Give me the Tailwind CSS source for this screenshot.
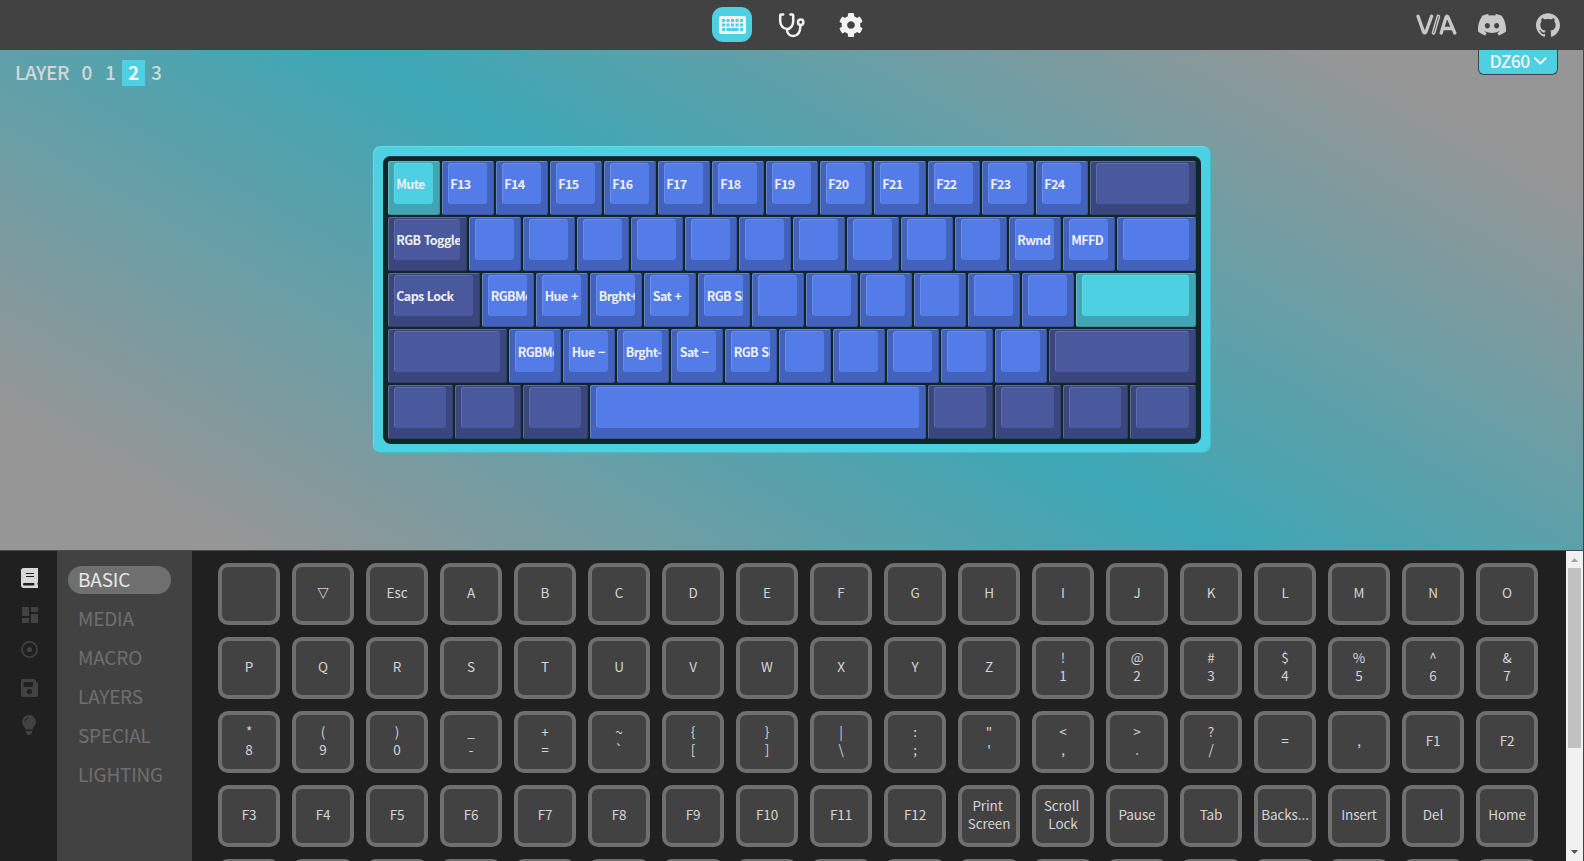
<!DOCTYPE html>
<html lang="en">
<head>
<meta charset="utf-8">
<title>VIA</title>
<script src="https://cdn.jsdelivr.net/npm/@tailwindcss/browser@4"></script>
</head>
<body class="h-[861px] w-[1584px] overflow-hidden bg-[#424242] pr-px font-['Noto_Sans_CJK_SC','Noto_Sans',sans-serif]">
<div class="flex h-full flex-col">
  <header class="relative flex h-[50px] shrink-0 items-start justify-center bg-[#424242] text-[#f2f2f2]">
    <nav class="flex w-[159px] pt-[7px]">
      <a class="flex h-[35px] w-10 items-center justify-center rounded-[11px] bg-[#4dd0e1]">
        <svg class="h-[18px] w-[27px]" viewBox="0 0 27 18"><rect width="27" height="18" rx="2.2" fill="currentColor"/><g fill="#4dd0e1"><path d="M3 3h3v3H3zM7.500 3h3v3h-3zM12 3h3v3h-3zM16.500 3h3v3h-3zM21 3h3v3h-3zM3 7.600h3v3H3zM7.500 7.600h3v3h-3zM12 7.600h3v3h-3zM16.500 7.600h3v3h-3zM21 7.600h3v3h-3zM3 12.100h3v3H3zM7.500 12.100h12v3h-12zM21 12.100h3v3h-3z"/></g></svg>
      </a>
      <a class="ml-[26px] mt-[5px] h-[26px] w-[28px]">
        <svg class="h-[26px] w-[28px]" viewBox="0 0 28 26" fill="none" stroke="currentColor" stroke-width="2.500" stroke-linecap="round" stroke-linejoin="round"><path d="M5.200 2.400H3.200Q2.200 2.400 2.200 3.600V9C2.200 13 5 17 9 17s6.200-4 6.200-8V3.600Q15.200 2.400 14.200 2.400H12.400M9 17.500C9 21.500 12 24 15.500 24C20.500 24 22.200 20 22.500 13.500"/><circle cx="22.700" cy="10.200" r="2.700"/></svg>
      </a>
      <a class="ml-[33px] mt-[6px] h-6 w-6">
        <svg class="h-6 w-6" viewBox="8 8 496 496" fill="currentColor"><path d="M487.400 315.700l-42.600-24.600c4.300-23.200 4.300-47 0-70.200l42.600-24.600c4.900-2.800 7.100-8.600 5.500-14-11.100-35.600-30-67.800-54.700-94.600-3.800-4.100-10-5.100-14.800-2.300L380.800 110c-17.900-15.400-38.500-27.300-60.800-35.100V25.800c0-5.600-3.900-10.500-9.400-11.700-36.700-8.200-74.300-7.800-109.200 0-5.500 1.200-9.400 6.100-9.400 11.700V75c-22.200 7.900-42.800 19.800-60.800 35.100L88.700 85.500c-4.900-2.800-11-1.900-14.800 2.300-24.700 26.700-43.600 58.900-54.700 94.600-1.700 5.400.6 11.200 5.500 14L67.300 221c-4.300 23.200-4.300 47 0 70.200l-42.600 24.600c-4.900 2.800-7.100 8.600-5.500 14 11.100 35.600 30 67.800 54.700 94.600 3.800 4.100 10 5.100 14.800 2.300l42.600-24.600c17.900 15.400 38.500 27.300 60.800 35.100v49.200c0 5.600 3.900 10.500 9.400 11.700 36.700 8.200 74.300 7.800 109.200 0 5.500-1.200 9.400-6.100 9.400-11.700v-49.200c22.200-7.900 42.800-19.800 60.800-35.100l42.600 24.600c4.900 2.800 11 1.900 14.800-2.300 24.700-26.700 43.600-58.900 54.700-94.600 1.500-5.500-.7-11.300-5.600-14.100zM256 336c-44.100 0-80-35.900-80-80s35.900-80 80-80 80 35.900 80 80-35.900 80-80 80z"/></svg>
      </a>
    </nav>
    <div class="absolute right-[23px] top-[13px] flex text-[#c8c8c8]">
      <svg class="h-6 w-[42px]" viewBox="0 0 42 24" fill="none" stroke="currentColor" stroke-linecap="round" stroke-linejoin="round"><path stroke-width="3.300" d="M2 3.200L7.500 18.800Q8.800 21 10 18.800L15.600 3.200M25.200 20L30 4.200Q31 2.200 32 4.200L38.800 20M28.500 15.500H36"/><path stroke-width="3.800" d="M22.300 3.500L17.600 19.800"/><path stroke="#424242" stroke-width=".8" d="M22.300 3.500L17.600 19.800"/></svg>
      <svg class="ml-5 h-6 w-7" viewBox="0 2 24 20.500" fill="currentColor"><path d="M20.317 4.370a19.790 19.790 0 0 0-4.885-1.515.074.074 0 0 0-.079.037c-.21.375-.444.864-.608 1.250a18.270 18.270 0 0 0-5.487 0 12.640 12.640 0 0 0-.617-1.250.077.077 0 0 0-.079-.037A19.736 19.736 0 0 0 3.677 4.370a.07.07 0 0 0-.032.027C.533 9.046-.32 13.580.099 18.057a.082.082 0 0 0 .031.057 19.900 19.900 0 0 0 5.993 3.030.078.078 0 0 0 .084-.028c.462-.63.874-1.295 1.226-1.994a.076.076 0 0 0-.041-.106 13.107 13.107 0 0 1-1.872-.892.077.077 0 0 1-.008-.128c.126-.094.252-.192.372-.291a.074.074 0 0 1 .077-.01c3.928 1.793 8.180 1.793 12.062 0a.074.074 0 0 1 .078.009c.12.1.246.198.373.292a.077.077 0 0 1-.006.127 12.300 12.300 0 0 1-1.873.892.077.077 0 0 0-.041.107c.36.698.772 1.362 1.225 1.993a.076.076 0 0 0 .084.028 19.839 19.839 0 0 0 6.002-3.030.077.077 0 0 0 .032-.054c.5-5.177-.838-9.674-3.549-13.660a.061.061 0 0 0-.031-.03zM8.020 15.330c-1.183 0-2.157-1.085-2.157-2.419 0-1.333.956-2.419 2.157-2.419 1.210 0 2.176 1.096 2.157 2.420 0 1.333-.956 2.418-2.157 2.418zm7.975 0c-1.183 0-2.157-1.085-2.157-2.419 0-1.333.955-2.419 2.157-2.419 1.210 0 2.176 1.096 2.157 2.420 0 1.333-.946 2.418-2.157 2.418z"/></svg>
      <svg class="ml-[30px] h-6 w-6" viewBox="0 0 24 24" fill="currentColor"><path d="M12 .297c-6.630 0-12 5.373-12 12 0 5.303 3.438 9.800 8.205 11.385.6.113.82-.258.82-.577 0-.285-.01-1.040-.015-2.040-3.338.724-4.042-1.610-4.042-1.610C4.422 18.070 3.633 17.700 3.633 17.700c-1.087-.744.084-.729.084-.729 1.205.084 1.838 1.236 1.838 1.236 1.070 1.835 2.809 1.305 3.495.998.108-.776.417-1.305.76-1.605-2.665-.3-5.466-1.332-5.466-5.930 0-1.310.465-2.380 1.235-3.220-.135-.303-.54-1.523.105-3.176 0 0 1.005-.322 3.300 1.230.96-.267 1.980-.399 3-.405 1.020.006 2.040.138 3 .405 2.280-1.552 3.285-1.230 3.285-1.230.645 1.653.24 2.873.12 3.176.765.84 1.230 1.910 1.230 3.220 0 4.610-2.805 5.625-5.475 5.920.42.36.81 1.096.81 2.220 0 1.606-.015 2.896-.015 3.286 0 .315.21.69.825.57C20.565 22.092 24 17.592 24 12.297c0-6.627-5.373-12-12-12"/></svg>
    </div>
  </header>

  <section class="relative flex h-[500px] shrink-0 items-start justify-center bg-[linear-gradient(30deg,#969696_10%,#3ca7b5_50%,#969696_90%)] pt-[96px]">
    <div class="absolute left-[15px] top-[10px] flex h-[26px] items-center text-[19px] leading-[24px] font-medium text-[#d3d8d9]">
      <span class="mr-[3px] w-[57px] pb-[2px] tracking-[-0.5px]">LAYER</span>
      <span class="w-[24px] pb-[2px] text-center">0</span><span class="w-[23px] pb-[2px] text-center">1</span><span class="w-[23px] bg-[#4dd0e1] pb-[2px] text-center font-bold text-[#f5f5f5]">2</span><span class="w-[23px] pb-[2px] text-center">3</span>
    </div>
    <button class="absolute right-[25px] top-0 flex h-[25px] w-20 items-center rounded-b-md border border-t-0 border-[#424242] bg-[#4dd0e1] pb-[3px] pl-[10px] text-[17.500px] leading-[20px] font-medium text-[#f0f0f0]">
      <span class="w-[41px] pt-px tracking-[-0.6px]">DZ60</span>
      <svg class="ml-[3px] h-2 w-[15px]" viewBox="0 0 15 8" fill="none" stroke="currentColor" stroke-width="2.200" stroke-linecap="round" stroke-linejoin="round"><path d="M2 1.200l5.300 5.300 5.300-5.300"/></svg>
    </button>
    <div class="h-[307px] w-[838px] rounded-lg bg-[#4dd0e1] px-[10.500px] py-[10px] shadow-[inset_1px_1px_0_#ffffff30,inset_-1px_-1px_0_#00000018]">
      <div id="board" class="flex h-[288px] w-[817.500px] flex-col gap-[2px] rounded-lg bg-[#10272a] pl-[4.750px] pt-[5px] shadow-[inset_0_1px_0_#333a3c]"></div>
    </div>
  </section>

  <main class="flex min-h-0 flex-1 border-t border-[#4b4b4b] bg-[#202020]">
    <aside class="flex w-[57px] shrink-0 flex-col pl-[21px] pt-[17px] text-[#424242]">
      <svg class="h-5 w-[17px] text-[#d9d9d9]" viewBox="0 0 17 20" fill="currentColor" fill-rule="evenodd"><path d="M2.500 0H17v14.200c-.7.500-.7 2.300 0 3V20H2.800C1.200 20 0 18.800 0 17.200V2.500C0 1 1 0 2.500 0zM2.800 15c-1.100 0-1.100 2.500 0 2.500h10.500V15zM5 5v1h8V5zM5 8v1h8V8z"/></svg>
      <svg class="ml-px mt-[19px] h-4 w-4" viewBox="0 0 16 16" fill="currentColor"><path d="M0 0h7v9H0zM9 0h7v5H9zM0 11h7v5H0zM9 7h7v9H9z"/></svg>
      <svg class="mt-[18px] h-[17px] w-[17px]" viewBox="0 0 17 17"><circle cx="8.500" cy="8.500" r="7.600" fill="none" stroke="currentColor" stroke-width="1.700"/><circle cx="8.500" cy="8.500" r="2.600" fill="currentColor"/></svg>
      <svg class="mt-[21px] h-[18px] w-[17px]" viewBox="0 0 17 18" fill="currentColor" fill-rule="evenodd"><path d="M2.200 0H13l4 4.200V16q0 2-2 2H2q-2 0-2-2V2.200Q0 0 2.200 0zM3.500 3q-1 0-1 1v3q0 1 1 1H11q1 0 1-1V4q0-1-1-1zM8.500 10a2.600 2.600 0 1 0 0 5.200 2.600 2.600 0 0 0 0-5.200z"/></svg>
      <svg class="ml-px mt-[18px] h-5 w-[14px]" viewBox="0 0 14 20" fill="currentColor"><path d="M7 0a7 7 0 0 1 7 7c0 3.500-3 4.500-3.500 7.500h-7C3 11.500 0 10.500 0 7a7 7 0 0 1 7-7zM4 16h6.200v1.500L8.500 20h-3L4 17.500z"/><path d="M3 6.800C3.200 4.500 4.600 3.100 6.800 2.900" fill="none" stroke="#202020" stroke-width="1"/></svg>
    </aside>
    <nav class="flex w-[135px] shrink-0 flex-col gap-[11px] bg-[#424242] pl-[11px] pt-[15px] text-[19px] leading-[26px] tracking-[-0.2px] text-[#6f6f6f]">
      <a class="w-[103px] rounded-[14px] bg-[#6f6f6f] pb-[2px] pl-[10px] text-[#e8e8e8]">BASIC</a>
      <a class="pb-[2px] pl-[10px]">MEDIA</a>
      <a class="pb-[2px] pl-[10px]">MACRO</a>
      <a class="pb-[2px] pl-[10px]">LAYERS</a>
      <a class="pb-[2px] pl-[10px]">SPECIAL</a>
      <a class="pb-[2px] pl-[10px]">LIGHTING</a>
    </nav>
    <div id="keys" class="grid min-w-0 flex-1 auto-rows-[62px] grid-cols-[repeat(18,62px)] gap-3 overflow-hidden pl-[26px] pt-[12px]"></div>
    <div class="flex w-[17px] shrink-0 flex-col items-center bg-[#f1f1f1]">
      <svg class="h-[17px] w-[17px]" viewBox="0 0 17 17"><path d="M5 11h7L8.500 7z" fill="#a3a3a3"/></svg>
      <div class="h-[180px] w-[13px] bg-[#c1c1c1]"></div>
      <svg class="mt-auto h-[17px] w-[17px]" viewBox="0 0 17 17"><path d="M5 6h7l-3.500 4z" fill="#505050"/></svg>
    </div>
  </main>
</div>
<script>
const tones = {
  b: ['bg-[#4362ba]', 'bg-[#547ce8]'],
  d: ['bg-[#3b467c]', 'bg-[#4a599e]'],
  t: ['bg-[#40a6b3]', 'bg-[#4dd0e1]']
};
// Each key: tone, width in key units, legend.
const rows = [
  [['t',1,'Mute'], ...Array.from({length:12}, (_, i) => ['b',1,'F' + (13 + i)]), ['d',2,'']],
  [['d',1.5,'RGB Toggle'], ...Array.from({length:10}, () => ['b',1,'']), ['b',1,'Rwnd'], ['b',1,'MFFD'], ['b',1.5,'']],
  [['d',1.75,'Caps Lock'], ...['RGBMo','Hue +','Brght+','Sat +','RGB SP','','','','','',''].map(t => ['b',1,t]), ['t',2.25,'']],
  [['d',2.25,''], ...['RGBMo','Hue −','Brght-','Sat −','RGB SP','','','','',''].map(t => ['b',1,t]), ['d',2.75,'']],
  [['d',1.25,''],['d',1.25,''],['d',1.25,''],['b',6.25,''],['d',1.25,''],['d',1.25,''],['d',1.25,''],['d',1.25,'']]
];
document.getElementById('board').innerHTML = rows.map(r => `<div class="flex h-[54px] gap-[2px]">${r.map(([c,w,t]) =>
  `<div class="shrink-0 rounded-[2px] pb-[11px] pl-[6px] pr-[7px] pt-[2px] shadow-[inset_1px_1px_0_#ffffff30,inset_-1px_-1px_0_#00000020] ${tones[c][0]}" style="width:${w*54-2}px"><div class="flex h-[41px] items-center overflow-hidden rounded-[3px] pl-[2.500px] pt-px text-[12.500px] font-bold leading-4 tracking-[-0.6px] [word-spacing:1px] whitespace-nowrap text-[#eee] shadow-[inset_1px_1px_0_#ffffff20] ${tones[c][1]}">${t}</div></div>`).join('')}</div>`).join('');

const labels = ['', '▽', 'Esc', ...'ABCDEFGHIJKLMNOPQRSTUVWXYZ', '!\n1', '@\n2', '#\n3', '$\n4', '%\n5', '^\n6', '&\n7', '*\n8', '(\n9', ')\n0', '_\n-', '+\n=', '~\n`', '{\n[', '}\n]', '|\n\\', ':\n;', '"\n\'', '<\n,', '>\n.', '?\n/', '=', ',',
  ...Array.from({length:12}, (_, i) => 'F' + (i + 1)), 'Print \nScreen', 'Scroll \nLock', 'Pause', 'Tab', 'Backs...', 'Insert', 'Del', 'Home', ...Array(18).fill('')];
const grid = document.getElementById('keys');
for (const t of labels) {
  const k = document.createElement('div');
  k.className = 'flex items-center justify-center rounded-[10px] border-4 border-[#6f6f6f] bg-[#424242] pb-[5px] text-center leading-[18px] whitespace-pre text-[#d4d4d4] ' + (t === '▽' ? "text-[14.500px] font-['DejaVu_Sans']" : 'text-[13.500px] tracking-[-0.1px]');
  k.textContent = t;
  grid.append(k);
}
</script>
</body>
</html>
